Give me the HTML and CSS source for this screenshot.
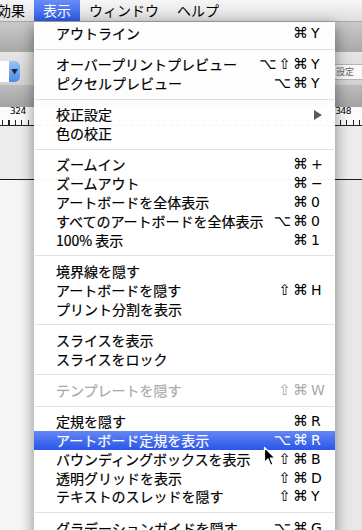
FILE: index.html
```html
<!DOCTYPE html>
<html lang="ja">
<head>
  <meta charset="UTF-8" />
  <meta name="viewport" content="width=device-width, initial-scale=1.0" />
  <title>表示メニュー</title>
  <link rel="stylesheet" href="styles.css">
</head>
<body>
  <div class="menubar">
    <span class="bar-item first">効果</span>
    <span class="bar-item active">表示</span>
    <span class="bar-item">ウィンドウ</span>
    <span class="bar-item">ヘルプ</span>
  </div>

  <div class="toolbar"></div>
  <div class="controlbar">
    <div class="popup"><span class="popup-cap">▼</span></div>
    <div class="field">設定</div>
  </div>
  <div class="band"></div>
  <div class="ruler">
    <span class="ruler-num">324</span>
    <span class="ruler-num">348</span>
  </div>
  <div class="canvas">
    <div class="guide"></div>
  </div>

  <div class="menu">
    <div class="item"><span class="label">アウトライン</span><span class="mods">⌘</span><span class="key">Y</span></div>
    <div class="sep"></div>
    <div class="item"><span class="label">オーバープリントプレビュー</span><span class="mods">⌥⇧⌘</span><span class="key">Y</span></div>
    <div class="item"><span class="label">ピクセルプレビュー</span><span class="mods">⌥⌘</span><span class="key">Y</span></div>
    <div class="sep"></div>
    <div class="item"><span class="label">校正設定</span>
      <svg class="arrow" width="8" height="10" viewBox="0 0 8 10"><polygon points="0,0 8,5 0,10" fill="#5c5c5c"/></svg>
    </div>
    <div class="item"><span class="label">色の校正</span></div>
    <div class="sep"></div>
    <div class="item"><span class="label">ズームイン</span><span class="mods">⌘</span><span class="key">+</span></div>
    <div class="item"><span class="label">ズームアウト</span><span class="mods">⌘</span><span class="key">−</span></div>
    <div class="item"><span class="label">アートボードを全体表示</span><span class="mods">⌘</span><span class="key">0</span></div>
    <div class="item"><span class="label">すべてのアートボードを全体表示</span><span class="mods">⌥⌘</span><span class="key">0</span></div>
    <div class="item"><span class="label">100% 表示</span><span class="mods">⌘</span><span class="key">1</span></div>
    <div class="sep"></div>
    <div class="item"><span class="label">境界線を隠す</span></div>
    <div class="item"><span class="label">アートボードを隠す</span><span class="mods">⇧⌘</span><span class="key">H</span></div>
    <div class="item"><span class="label">プリント分割を表示</span></div>
    <div class="sep"></div>
    <div class="item"><span class="label">スライスを表示</span></div>
    <div class="item"><span class="label">スライスをロック</span></div>
    <div class="sep"></div>
    <div class="item disabled"><span class="label">テンプレートを隠す</span><span class="mods">⇧⌘</span><span class="key">W</span></div>
    <div class="sep"></div>
    <div class="item"><span class="label">定規を隠す</span><span class="mods">⌘</span><span class="key">R</span></div>
    <div class="item selected"><span class="label">アートボード定規を表示</span><span class="mods">⌥⌘</span><span class="key">R</span></div>
    <div class="item"><span class="label">バウンディングボックスを表示</span><span class="mods">⇧⌘</span><span class="key">B</span></div>
    <div class="item"><span class="label">透明グリッドを表示</span><span class="mods">⇧⌘</span><span class="key">D</span></div>
    <div class="item"><span class="label">テキストのスレッドを隠す</span><span class="mods">⇧⌘</span><span class="key">Y</span></div>
    <div class="sep"></div>
    <div class="item"><span class="label">グラデーションガイドを隠す</span><span class="mods">⌥⌘</span><span class="key">G</span></div>
  </div>

  <svg class="cursor" width="14" height="21" viewBox="0 0 14 21">
    <path d="M1.5 1.5 L1.5 16.5 L5 13 L7.8 19.2 L10 18.2 L7.3 12.2 L12 12.2 Z" fill="#000" stroke="#fff" stroke-width="1.2" stroke-linejoin="round"/>
  </svg>
</body>
</html>
```

FILE: styles.css
```css
body {
  margin: 0;
  width: 362px;
  height: 530px;
  overflow: hidden;
  position: relative;
  background: #ececec;
  font-family: "Noto Sans CJK JP", "Noto Sans", sans-serif;
  color: #000;
}
.menubar {
  height: 21px;
  display: flex;
  align-items: center;
  background: linear-gradient(#f6f6f6, #dedede);
  border-bottom: 1px solid #a8a8a8;
  font-size: 14px;
  line-height: 21px;
  white-space: nowrap;
}
.bar-item {
  padding: 0 9px;
}
.bar-item.first {
  margin-left: -12px;
}
.bar-item.active {
  color: #fff;
  background: linear-gradient(#6a8cf6, #2d5ae9);
}
.toolbar {
  height: 30px;
  background: linear-gradient(#c9c9c9, #a9a9a9);
}
.controlbar {
  height: 33px;
  display: flex;
  justify-content: space-between;
  align-items: center;
  background: linear-gradient(#e6e6e6, #d2d2d2);
}
.popup {
  width: 20px;
  height: 21px;
  background: #fff;
  border-radius: 0 5px 5px 0;
  display: flex;
  justify-content: flex-end;
  margin-top: 5px;
}
.popup-cap {
  width: 11px;
  background: linear-gradient(#9cc4f4, #4c8ae6);
  border-radius: 0 5px 5px 0;
  font-size: 7px;
  line-height: 21px;
  text-align: center;
  color: #1a2a4a;
}
.field {
  width: 26px;
  height: 14px;
  background: #fafafa;
  border: 1px solid #b4b4b4;
  border-right: none;
  font-size: 9px;
  line-height: 14px;
  color: #666;
  padding-left: 1px;
  margin-top: 6px;
}
.band {
  height: 22px;
  background: linear-gradient(#bcbcbc, #a2a2a2);
}
.ruler {
  height: 18px;
  display: flex;
  justify-content: space-between;
  align-items: flex-start;
  padding: 0 11px 0 10px;
  background:
    repeating-linear-gradient(90deg, #222 0 1px, transparent 1px 6.5px) 2px 100% / 100% 5px no-repeat,
    #fbfbfb;
  border-bottom: 1px solid #222;
  font-family: "DejaVu Sans", sans-serif;
  font-size: 9px;
  line-height: 9px;
  letter-spacing: -0.5px;
}
.canvas {
  height: 400px;
  background: linear-gradient(90deg, #f6f6f6, #e8e8e8);
}
.guide {
  height: 1px;
  margin-top: 53px;
  background: #1a1a1a;
}
.menu {
  position: absolute;
  top: 22px;
  left: 34px;
  width: 301px;
  padding-top: 2px;
  background: rgba(255, 255, 255, 0.97);
  box-shadow: 0 4px 14px rgba(0, 0, 0, 0.45);
}
.item {
  height: 18.8px;
  display: flex;
  align-items: center;
  padding: 0 13px 0 22px;
  font-size: 14px;
  line-height: 18.8px;
  white-space: nowrap;
}
.label {
  flex: 1;
  -webkit-text-stroke: 0.2px currentColor;
}
.mods,
.key {
  font-family: "DejaVu Sans", sans-serif;
  font-size: 14px;
}
.mods {
  font-size: 15px;
  text-align: right;
  letter-spacing: 2px;
}
.key {
  width: 11px;
  padding-left: 1px;
}
.sep {
  height: 1px;
  margin: 6px 1px 5.5px;
  background: #e0e0e0;
}
.item.disabled {
  color: #a9a9a9;
}
.item.selected {
  color: #fff;
  background: linear-gradient(#6486f5, #2a56e8);
}
.cursor {
  position: absolute;
  left: 263px;
  top: 446px;
}
```
